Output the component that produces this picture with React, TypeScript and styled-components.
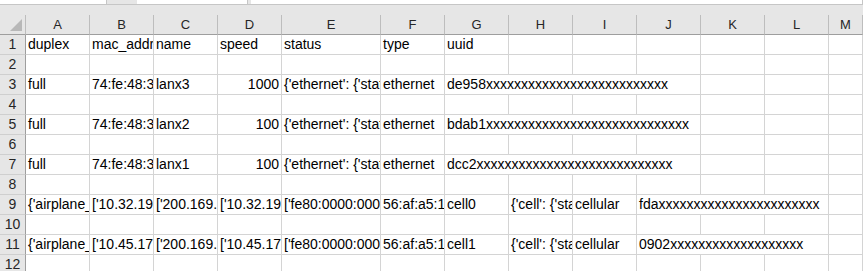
import React from "react";
import styled, { createGlobalStyle } from "styled-components";

const Global = createGlobalStyle`
  html, body { margin: 0; padding: 0; background: #ffffff; }
  body { font-family: "Liberation Sans", Arial, sans-serif; }
`;

const Page = styled.div`
  width: 863px;
  height: 271px;
  overflow: hidden;
  background: #e6e6e6;
  display: flex;
  flex-direction: column;
`;

const TopBar = styled.div`
  display: flex;
  height: 5px;
  flex: none;
  border-bottom: 1px solid #c6c6c6;
  box-sizing: border-box;
`;

const FieldBox = styled.div<{ $w?: number; $ml?: number }>`
  background: #ffffff;
  box-sizing: border-box;
  border-right: 1px solid #c6c6c6;
  height: 100%;
  margin-left: ${(p) => p.$ml ?? 0}px;
  ${(p) => (p.$w ? `width: ${p.$w}px; flex: none;` : `flex: 1;`)}
`;

const Band = styled.div`
  height: 10px;
  flex: none;
  background: #e6e6e6;
`;

const Sheet = styled.div`
  display: grid;
  grid-template-columns: 26px 64px 64px 64px 64px 99px 64px 64px 64px 64px 64px 64px 64px 1fr;
  grid-auto-rows: 20px;
  background: #ffffff;
  font-family: "Liberation Sans", Arial, sans-serif;
`;

const Corner = styled.div`
  background: #e6e6e6;
  box-sizing: border-box;
  border-right: 1px solid #bdbdbd;
  border-bottom: 1px solid #9e9e9e;
  display: flex;
  justify-content: flex-end;
  align-items: flex-end;
  padding: 0 3px 3px 0;
`;

const ColHead = styled.div`
  background: #e6e6e6;
  box-sizing: border-box;
  border-right: 1px solid #bdbdbd;
  border-bottom: 1px solid #9e9e9e;
  font-size: 13px;
  line-height: 19px;
  color: #262626;
  text-align: center;
  overflow: hidden;
  white-space: nowrap;
`;

const RowHead = styled.div`
  background: #e6e6e6;
  box-sizing: border-box;
  border-right: 1px solid #9e9e9e;
  border-bottom: 1px solid #cfcfcf;
  font-size: 14px;
  line-height: 19px;
  color: #262626;
  text-align: center;
`;

const Cell = styled.div<{ $span?: number; $right?: boolean }>`
  grid-column: span ${(p) => p.$span ?? 1};
  box-sizing: border-box;
  border-right: 1px solid #d4d4d4;
  border-bottom: 1px solid #d4d4d4;
  padding: 0 2px;
  font-size: 14px;
  line-height: 19px;
  color: #000000;
  white-space: nowrap;
  overflow: hidden;
  text-align: ${(p) => (p.$right ? "right" : "left")};
`;

type C = { t: string; span?: number; right?: boolean };

const cols = ["A", "B", "C", "D", "E", "F", "G", "H", "I", "J", "K", "L", "M"];

const x = (n: number) => "x".repeat(n);

const e = (): C => ({ t: "" });
const empty = (): C[] => cols.map(() => e());

const eth = (name: string, speed: string, mac: string, uuid: string): C[] => [
  { t: "full" },
  { t: mac },
  { t: name },
  { t: speed, right: true },
  { t: "{'ethernet': {'state': 'connected'}}" },
  { t: "ethernet" },
  { t: uuid, span: 4 },
  e(),
  e(),
  e(),
];

const cell = (name: string, net: string, mac: string, uuid: string): C[] => [
  { t: "{'airplane_mode': False}" },
  { t: `['${net}.23']` },
  { t: "['200.169.1.1']" },
  { t: `['${net}.1']` },
  { t: "['fe80:0000:0000:0000:0000:0000:0000:0001']" },
  { t: mac },
  { t: name },
  { t: "{'cell': {'state': 'connected'}}" },
  { t: "cellular" },
  { t: uuid, span: 3 },
  e(),
];

const rows: C[][] = [
  [
    { t: "duplex" },
    { t: "mac_address" },
    { t: "name" },
    { t: "speed" },
    { t: "status" },
    { t: "type" },
    { t: "uuid" },
    e(), e(), e(), e(), e(), e(),
  ],
  empty(),
  eth("lanx3", "1000", "74:fe:48:3a:1c:01", "de958" + x(26)),
  empty(),
  eth("lanx2", "100", "74:fe:48:3a:1c:02", "bdab1" + x(29)),
  empty(),
  eth("lanx1", "100", "74:fe:48:3a:1c:03", "dcc2" + x(28)),
  empty(),
  cell("cell0", "10.32.193", "56:af:a5:12:34:56", "fda" + x(23)),
  empty(),
  cell("cell1", "10.45.179", "56:af:a5:12:34:57", "0902" + x(19)),
  empty(),
];

export default function App() {
  return (
    <>
      <Global />
      <Page>
        <TopBar>
          <FieldBox $w={107} />
          <FieldBox $w={111} $ml={30} />
          <FieldBox $ml={3} />
        </TopBar>
        <Band />
        <Sheet>
          <Corner>
            <svg width="12" height="12" viewBox="0 0 12 12">
              <polygon points="12,0 12,12 0,12" fill="#b8b8b8" />
            </svg>
          </Corner>
          {cols.map((c) => (
            <ColHead key={c}>{c}</ColHead>
          ))}
          {rows.map((r, i) => (
            <React.Fragment key={i}>
              <RowHead>{i + 1}</RowHead>
              {r.map((c, j) => (
                <Cell key={j} $span={c.span} $right={c.right}>
                  {c.t}
                </Cell>
              ))}
            </React.Fragment>
          ))}
        </Sheet>
      </Page>
    </>
  );
}
